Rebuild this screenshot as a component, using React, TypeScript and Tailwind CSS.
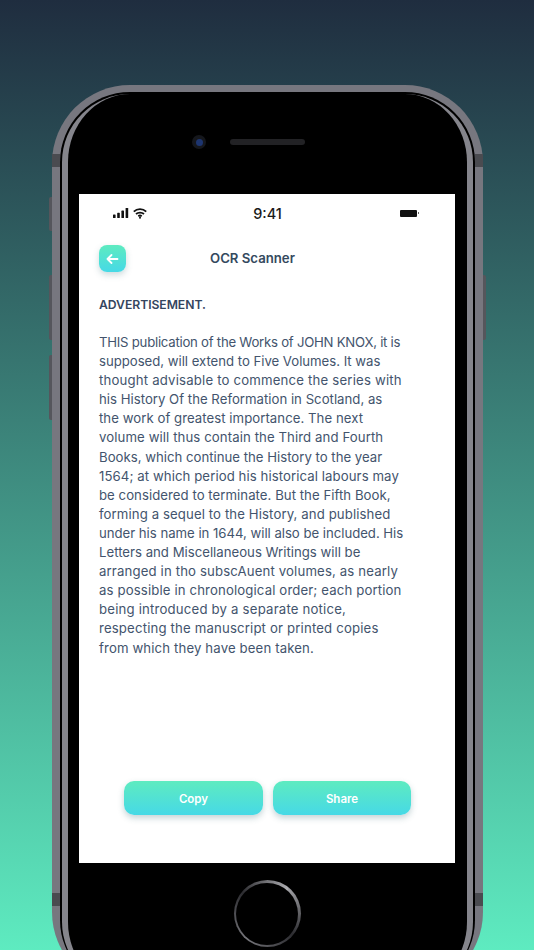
const lines = [
  { text: "THIS publication of the Works of JOHN KNOX, it is", tracking: "tracking-[-0.25px]" },
  { text: "supposed, will extend to Five Volumes. It was", tracking: "tracking-[-0.03px]" },
  { text: "thought advisable to commence the series with", tracking: "tracking-[0.18px]" },
  { text: "his History Of the Reformation in Scotland, as", tracking: "tracking-[0.01px]" },
  { text: "the work of greatest importance. The next", tracking: "tracking-[0.04px]" },
  { text: "volume will thus contain the Third and Fourth", tracking: "tracking-[0.09px]" },
  { text: "Books, which continue the History to the year", tracking: "tracking-[0px]" },
  { text: "1564; at which period his historical labours may", tracking: "tracking-[0.08px]" },
  { text: "be considered to terminate. But the Fifth Book,", tracking: "tracking-[0.04px]" },
  { text: "forming a sequel to the History, and published", tracking: "tracking-[0.1px]" },
  { text: "under his name in 1644, will also be included. His", tracking: "tracking-[-0.03px]" },
  { text: "Letters and Miscellaneous Writings will be", tracking: "tracking-[0px]" },
  { text: "arranged in tho subscAuent volumes, as nearly", tracking: "tracking-[0.14px]" },
  { text: "as possible in chronological order; each portion", tracking: "tracking-[0.13px]" },
  { text: "being introduced by a separate notice,", tracking: "tracking-[0.19px]" },
  { text: "respecting the manuscript or printed copies", tracking: "tracking-[0.16px]" },
  { text: "from which they have been taken.", tracking: "tracking-[0.13px]" },
]

function StatusBar() {
  return (
    <div className="flex h-[14px] items-center justify-between pl-[34px] pr-[36px]">
      <div className="flex w-[70px] items-center gap-[4px]">
        {/* Signal */}
        <svg width="16" height="10" viewBox="0 0 16 10" fill="#111">
          <rect x="0" y="6.5" width="2.6" height="3.5" rx="0.6" />
          <rect x="4.2" y="4.8" width="2.6" height="5.2" rx="0.6" />
          <rect x="8.4" y="2.6" width="2.6" height="7.4" rx="0.6" />
          <rect x="12.6" y="0" width="2.6" height="10" rx="0.6" />
        </svg>
        {/* Wifi */}
        <svg width="14" height="11" viewBox="0 0 14 11" fill="none" stroke="#111" strokeWidth="1.8">
          <path d="M0.8 3.6 C4.2 0.4 9.8 0.4 13.2 3.6" />
          <path d="M3 6 C5.2 4.1 8.8 4.1 11 6" />
          <path d="M5.3 8.2 C6.3 7.4 7.7 7.4 8.7 8.2" />
          <circle cx="7" cy="9.8" r="1" fill="#111" stroke="none" />
        </svg>
      </div>
      <span className="ml-[3px] mt-[2px] text-[14.5px] font-medium text-[#1a1a1a]">9:41</span>
      <div className="flex w-[70px] items-center justify-end gap-[1px]">
        <div className="h-[7px] w-[17px] rounded-[1px] bg-[#111]"></div>
        <div className="h-[2px] w-[1px] bg-[#666]"></div>
      </div>
    </div>
  )
}

function ActionButton({ label, width }: { label: string; width: string }) {
  return (
    <button
      className={`flex h-[34px] ${width} items-center justify-center rounded-[10px] bg-[linear-gradient(180deg,#5eebc0,#46d9e6)] pt-[3px] text-[11.5px] font-semibold text-white shadow-[0_3px_6px_rgba(60,110,120,0.3)]`}
    >
      {label}
    </button>
  )
}

function Screen() {
  return (
    <div className="flex h-[669px] w-[376px] flex-col bg-white pt-[12px] font-['Inter',sans-serif]">
      <StatusBar />
      {/* Header */}
      <div className="mt-[25px] flex h-[27px] items-center pl-[20px]">
        <button className="flex h-[27px] w-[27px] items-center justify-center rounded-[8px] bg-[linear-gradient(180deg,#5eebc0,#46d9e6)] shadow-[0_3px_6px_rgba(60,110,120,0.25)]">
          <svg width="13" height="12" viewBox="0 0 13 12" fill="none" stroke="#fff" strokeWidth="1.8" strokeLinecap="round" strokeLinejoin="round">
            <path d="M11.5 6 H1.5 M5.5 2 L1.5 6 L5.5 10" />
          </svg>
        </button>
        <span className="ml-[84px] text-[13.2px] font-semibold text-[#34495e]">OCR Scanner</span>
      </div>
      {/* Scanned text */}
      <div className="mt-[23px] pl-[20px] text-[#43546d]">
        <div className="text-[12.2px] font-semibold leading-[19px] tracking-[-0.05px] text-[#34455e]">ADVERTISEMENT.</div>
        <div className="mt-[19px] text-[13.2px] leading-[19.1px]">
          {lines.map((line) => (
            <div key={line.text} className={`whitespace-nowrap ${line.tracking}`}>
              {line.text}
            </div>
          ))}
        </div>
      </div>
      {/* Actions */}
      <div className="mt-auto mb-[48px] flex justify-center gap-[10px] pl-[1px]">
        <ActionButton label="Copy" width="w-[139px]" />
        <ActionButton label="Share" width="w-[138px]" />
      </div>
    </div>
  )
}

export default function App() {
  return (
    <div className="flex h-[950px] w-[534px] justify-center overflow-hidden bg-[linear-gradient(180deg,#1f2d3f,#5eebc0)] pt-[85px]">
      {/* Phone shell */}
      <div className="relative h-[905px] w-[431px] shrink-0 rounded-[78px] bg-[#77777f] px-[8px] pt-[7px]">
        {/* Side buttons */}
        <div className="absolute -left-[3px] top-[112px] h-[34px] w-[3px] rounded-l-[2px] bg-[#55565c]"></div>
        <div className="absolute -left-[3px] top-[190px] h-[65px] w-[3px] rounded-l-[2px] bg-[#55565c]"></div>
        <div className="absolute -left-[3px] top-[270px] h-[65px] w-[3px] rounded-l-[2px] bg-[#55565c]"></div>
        <div className="absolute -right-[3px] top-[190px] h-[65px] w-[3px] rounded-r-[2px] bg-[#55565c]"></div>
        {/* Antenna bands */}
        <div className="absolute left-0 top-[69px] h-[13px] w-[8px] bg-[#4a4b50]"></div>
        <div className="absolute right-0 top-[69px] h-[13px] w-[8px] bg-[#4a4b50]"></div>
        <div className="absolute left-0 top-[808px] h-[13px] w-[8px] bg-[#4a4b50]"></div>
        <div className="absolute right-0 top-[808px] h-[13px] w-[8px] bg-[#4a4b50]"></div>

        <div className="h-full rounded-[70px] bg-black px-[2px] pt-[2px]">
          <div className="flex h-full flex-col items-center rounded-[68px] border-x-[6px] border-[#85858c] bg-black">
            {/* Camera and speaker */}
            <div className="mt-[41px] flex h-[14px] items-center gap-[24px] pr-[37px]">
              <div className="flex h-[14px] w-[14px] items-center justify-center rounded-full bg-[#15171c]">
                <div className="h-[7px] w-[7px] rounded-full bg-[#1d3570]"></div>
              </div>
              <div className="h-[6px] w-[75px] rounded-full bg-[#222225]"></div>
            </div>
            <div className="mt-[45px]">
              <Screen />
            </div>
            {/* Home button */}
            <div className="mt-[17px] h-[67px] w-[67px] rounded-full bg-[conic-gradient(from_40deg,#a0a0a4,#2c2c30_25%,#77777c_50%,#2c2c30_75%,#b0b0b4)] p-[2.5px]">
              <div className="h-full w-full rounded-full bg-black"></div>
            </div>
          </div>
        </div>
      </div>
    </div>
  )
}
